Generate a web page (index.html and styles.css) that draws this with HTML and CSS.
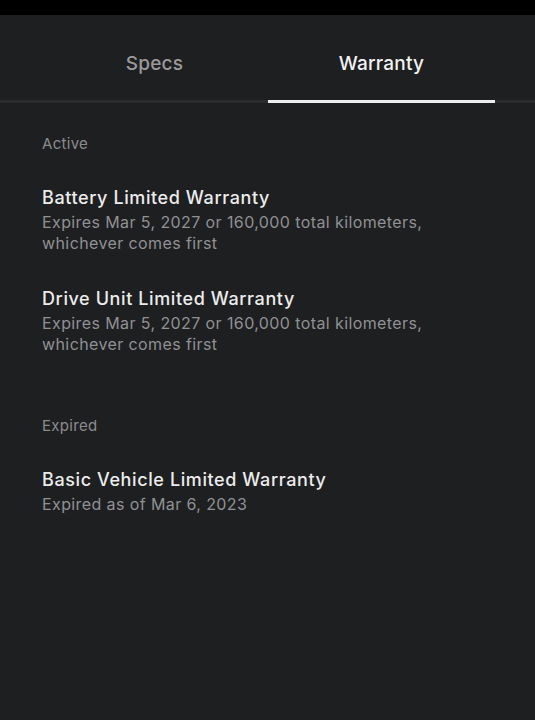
FILE: index.html
```html
<!DOCTYPE html>
<html lang="en">
<head>
    <meta charset="UTF-8">
    <meta name="viewport" content="width=device-width, initial-scale=1.0">
    <title>Warranty</title>
    <link rel="stylesheet" href="styles.css">
</head>
<body>
    <div class="status-bar"></div>
    <div class="tabs">
        <div class="tab">Specs</div>
        <div class="tab active">Warranty</div>
    </div>
    <div class="content">
        <div class="section">
            <div class="section-label">Active</div>
            <div class="item">
                <div class="item-title">Battery Limited Warranty</div>
                <div class="item-sub">Expires Mar 5, 2027 or 160,000 total kilometers, whichever comes first</div>
            </div>
            <div class="item">
                <div class="item-title">Drive Unit Limited Warranty</div>
                <div class="item-sub">Expires Mar 5, 2027 or 160,000 total kilometers, whichever comes first</div>
            </div>
        </div>
        <div class="section">
            <div class="section-label">Expired</div>
            <div class="item">
                <div class="item-title">Basic Vehicle Limited Warranty</div>
                <div class="item-sub">Expired as of Mar 6, 2023</div>
            </div>
        </div>
    </div>
</body>
</html>
```

FILE: styles.css
```css
html, body {
    height: 100%;
}
body {
    font-family: Inter, "Noto Sans", sans-serif;
    background-color: #1e1f21;
    color: #ececec;
    margin: 0;
    padding: 0;
}
.status-bar {
    height: 15px;
    background-color: #000;
}
.tabs {
    display: flex;
    padding: 0 40px 0 41px;
    border-bottom: 3px solid #2a2b2d;
}
.tab {
    flex: 1;
    text-align: center;
    font-size: 19px;
    font-weight: 500;
    line-height: 24px;
    letter-spacing: 0.2px;
    padding: 37px 0 24px;
    margin-bottom: -3px;
    border-bottom: 3px solid transparent;
    color: #9a9a9b;
}
.tab.active {
    color: #f2f2f2;
    border-bottom-color: #ededed;
}
.content {
    padding: 31px 40px 0 42px;
}
.section {
    margin-bottom: 61px;
}
.section-label {
    font-size: 15px;
    line-height: 20px;
    letter-spacing: 0.3px;
    color: #8b8c8e;
    margin-bottom: 32px;
}
.item {
    margin-bottom: 33px;
}
.item:last-child {
    margin-bottom: 0;
}
.item-title {
    font-size: 18px;
    font-weight: 500;
    line-height: 24px;
    letter-spacing: 0.6px;
    color: #ececec;
}
.item-sub {
    font-size: 16px;
    line-height: 21px;
    letter-spacing: 0.4px;
    margin-top: 2px;
    color: #909193;
    max-width: 410px;
}
```
